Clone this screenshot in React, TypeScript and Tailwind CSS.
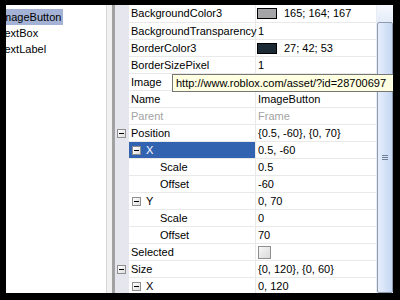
import React from "react";

type Prop = {
  name: string;
  value?: string;
  level?: number;
  open?: boolean;
  selected?: boolean;
  disabled?: boolean;
  swatch?: string;
  check?: boolean;
};

const TREE = ["ImageButton", "TextBox", "TextLabel"];

const PROPS: Prop[] = [
  { name: "BackgroundColor3", value: "165; 164; 167", swatch: "#a5a4a7" },
  { name: "BackgroundTransparency", value: "1" },
  { name: "BorderColor3", value: "27; 42; 53", swatch: "#1b2a35" },
  { name: "BorderSizePixel", value: "1" },
  { name: "Image", value: "" },
  { name: "Name", value: "ImageButton" },
  { name: "Parent", value: "Frame", disabled: true },
  { name: "Position", value: "{0.5, -60}, {0, 70}", open: true },
  { name: "X", value: "0.5, -60", level: 1, open: true, selected: true },
  { name: "Scale", value: "0.5", level: 2 },
  { name: "Offset", value: "-60", level: 2 },
  { name: "Y", value: "0, 70", level: 1, open: true },
  { name: "Scale", value: "0", level: 2 },
  { name: "Offset", value: "70", level: 2 },
  { name: "Selected", check: true },
  { name: "Size", value: "{0, 120}, {0, 60}", open: true },
  { name: "X", value: "0, 120", level: 1, open: true },
];

function Expander() {
  return (
    <span className="flex h-[9px] w-[9px] shrink-0 items-center justify-center border border-[#8f8f8f] bg-gradient-to-br from-white to-[#dedede]">
      <span className="h-px w-[5px] bg-black" />
    </span>
  );
}

function PropRow({ p, first }: { p: Prop; first: boolean }) {
  const level = p.level ?? 0;
  return (
    <div className={`flex shrink-0 ${first ? "h-[18px]" : "h-[17px]"}`}>
      {/* gutter with top level expanders */}
      <div className="flex w-[14px] shrink-0 items-center bg-[#e6e6ee] pl-[2px]">
        {level === 0 && p.open && <Expander />}
      </div>
      <div
        className={`flex w-[127px] shrink-0 items-center whitespace-nowrap border-b border-r border-[#e9e9e9] ${
          p.selected ? "bg-[#3263b1] text-white" : p.disabled ? "text-[#a3a3a3]" : "text-black"
        } ${level === 0 ? "pl-[2px]" : level === 1 ? "pl-[3px]" : "pl-[31px]"}`}
      >
        {level === 1 && <Expander />}
        <span className={level === 1 ? "ml-[5px]" : ""}>{p.name}</span>
      </div>
      <div
        className={`flex flex-1 items-center whitespace-nowrap border-b border-[#e9e9e9] pl-[2px] ${
          p.disabled ? "text-[#a3a3a3]" : "text-black"
        }`}
      >
        {p.swatch && (
          <span
            className="-ml-[1px] mr-[7px] h-[11px] w-[20px] shrink-0 border border-black"
            style={{ background: p.swatch }}
          />
        )}
        {p.check && (
          <span className="h-[13px] w-[13px] border border-[#8e8f8f] bg-gradient-to-br from-[#f6f6f6] to-[#dadada]" />
        )}
        {p.value}
      </div>
    </div>
  );
}

export default function App() {
  return (
    <div className="flex h-[300px] w-[400px] flex-col overflow-hidden bg-black font-['Liberation_Sans',Arial,sans-serif] text-[11px] leading-none">
      <div className="h-[5px] shrink-0" />
      <div className="flex h-[288px] shrink-0">
        <div className="w-[6px] shrink-0" />

        {/* explorer tree */}
        <div className="flex w-[100px] shrink-0 flex-col overflow-hidden bg-white pt-[4px]">
          {TREE.map((t, i) => (
            <div key={t} className="flex h-[16px] items-center">
              <span
                className={`-ml-[8px] flex h-[16px] items-center whitespace-nowrap pl-[1px] pr-[2px] text-black ${
                  i === 0 ? "bg-[#a4b3d5]" : ""
                }`}
              >
                {t}
              </span>
            </div>
          ))}
        </div>

        {/* splitter */}
        <div className="w-px shrink-0 bg-[#d6d6d6]" />
        <div className="w-[5px] shrink-0 bg-[#f1f1f1]" />
        <div className="w-[3px] shrink-0 bg-[#a2a2a2]" />

        {/* property grid + scrollbar */}
        <div className="relative flex overflow-hidden">
          <div className="flex w-[261px] shrink-0 flex-col overflow-hidden bg-white">
            {PROPS.map((p, i) => (
              <PropRow key={i} p={p} first={i === 0} />
            ))}
          </div>

          <div className="flex w-[17px] shrink-0 flex-col border-l border-[#e8edf4] bg-[#f2f5fa]">
            <div className="h-[17px] shrink-0 bg-gradient-to-b from-[#f5f8fd] to-[#e4ecf8]" />
            <div className="flex flex-1 items-center justify-center rounded-[2px] border border-[#8d9ab0] bg-gradient-to-r from-[#e6eefb] via-[#d6e3f8] to-[#c5d7f2]">
              <div className="flex flex-col gap-px">
                <span className="h-px w-[6px] bg-[#6f7f98]" />
                <span className="h-px w-[6px] bg-[#6f7f98]" />
                <span className="h-px w-[6px] bg-[#6f7f98]" />
              </div>
            </div>
          </div>

          {/* tooltip over the Image row */}
          <div className="absolute left-[57px] top-[69px] flex h-[18px] w-[232px] items-center whitespace-nowrap border border-[#767676] bg-[#ffffe1] pl-[3px] text-black">
            http://www.roblox.com/asset/?id=28700697
          </div>
        </div>
      </div>
    </div>
  );
}
